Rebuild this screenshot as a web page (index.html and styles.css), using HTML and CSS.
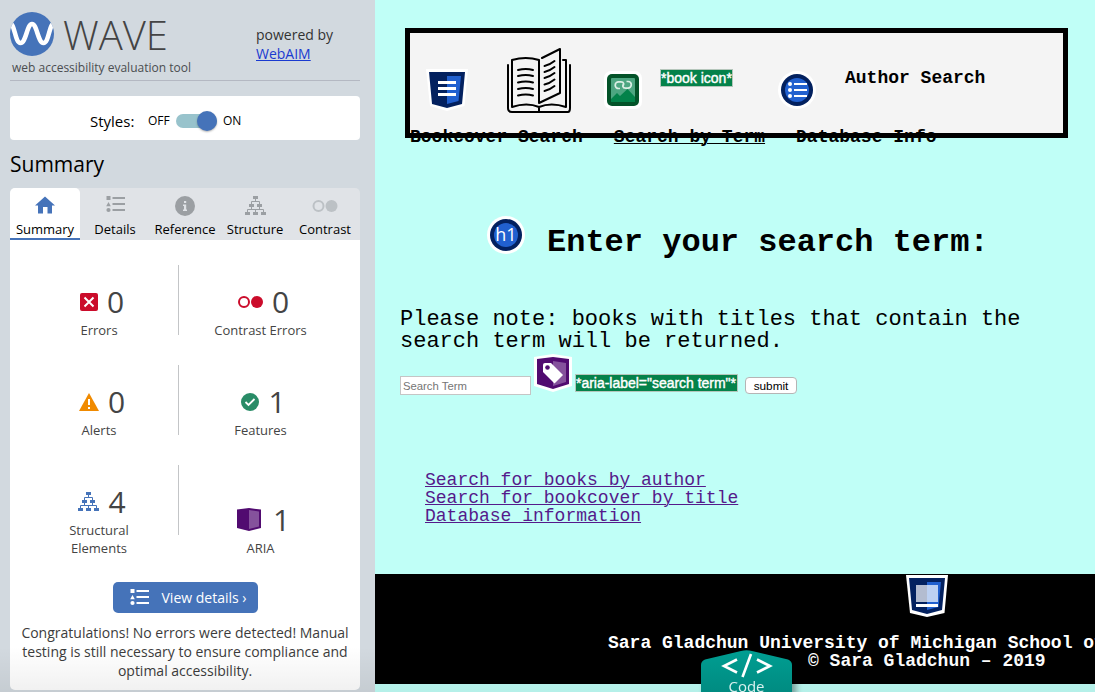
FILE: index.html
```
<!DOCTYPE html>
<html lang="en">
<head>
<meta charset="utf-8">
<title>WAVE - web accessibility evaluation tool</title>
<link rel="stylesheet" href="styles.css">
</head>
<body>
<svg class="defs" width="0" height="0">
  <symbol id="list" viewBox="0 0 19 17">
    <path d="M.5 0h4v4h-4zM2.5 6l2.3 4.300H.2z"/><circle cx="2.500" cy="14" r="2.100"/>
    <path d="M6.500 1h12.500v2H6.500zM6.500 7h12.500v2H6.500zM6.500 13h12.500v2H6.500z"/>
  </symbol>
  <symbol id="tree" viewBox="0 0 21 19">
    <path d="M8 0h5v3H8zM4 8h5v3H4zM12 8h5v3h-5zM0 16h5v3H0zM8 16h5v3H8zM16 16h5v3h-5z"/>
    <path d="M10.500 3v2.500M6.500 8V5.500h8V8M6.500 11v2.500M14.500 11v2.500M2.500 16v-2.500h16V16M10.500 13.500V16" fill="none" stroke="currentColor"/>
  </symbol>
</svg>
<aside class="sidebar">
  <header class="brand">
    <div class="brand-main">
      <div class="logo">
        <svg width="44" height="44" viewBox="0 0 44 44"><defs><clipPath id="disc"><circle cx="22" cy="22" r="22"/></clipPath></defs><circle cx="22" cy="22" r="22" fill="#4573b9"/><path clip-path="url(#disc)" d="M0 11.500C5 12 5 31 10.500 31S17 12 22 12s6 19 11.500 19S39 12 44 11.500" fill="none" stroke="#fff" stroke-width="4.600"/></svg>
        <span class="wordmark">WAVE</span>
      </div>
      <div class="tagline">web accessibility evaluation tool</div>
    </div>
    <div class="powered">powered by<br><a href="#">WebAIM</a></div>
  </header>
  <div class="styles-bar">
    <span class="styles-label">Styles:</span><span class="state">OFF</span><span class="switch"><span class="knob"></span></span><span class="state on">ON</span>
  </div>
  <h2 class="section-title">Summary</h2>
  <nav class="tabs">
    <div class="tab active"><div class="tab-icon"><svg width="20" height="18" viewBox="0 0 20 18"><path d="M10 .5L20 9.500h-3V17.500h-4.500V11h-4.500v6.500H3v-8H0z" fill="#4573b9"/></svg></div><span>Summary</span></div>
    <div class="tab"><div class="tab-icon"><svg width="19" height="17"><use href="#list"/></svg></div><span>Details</span></div>
    <div class="tab"><div class="tab-icon"><svg width="20" height="20" viewBox="0 0 20 20"><circle cx="10" cy="10" r="10"/><path d="M9 5h2.200v2H9zM8 8.500h3.200V13.500H12V15H8v-1.500h1V10H8z" fill="#e0e3e7"/></svg></div><span>Reference</span></div>
    <div class="tab"><div class="tab-icon"><svg width="21" height="19"><use href="#tree"/></svg></div><span>Structure</span></div>
    <div class="tab"><div class="tab-icon pair"><svg width="26" height="12" viewBox="0 0 26 12"><circle cx="6.500" cy="6" r="5" fill="none" stroke="#bcc1c5" stroke-width="2"/><circle cx="19.500" cy="6" r="6" fill="#bcc1c5"/></svg></div><span>Contrast</span></div>
  </nav>
  <section class="panel">
    <div class="counts">
      <div class="count-row">
        <div class="count left"><div class="figure"><svg width="18" height="18" viewBox="0 0 18 18"><rect width="18" height="18" rx="2" fill="#cb0c2b"/><path d="M4.500 4.500l9 9M13.500 4.500l-9 9" stroke="#fff" stroke-width="2"/></svg><b>0</b></div><span>Errors</span></div>
        <div class="count"><div class="figure"><svg width="25" height="12" viewBox="0 0 25 12"><circle cx="6" cy="6" r="5" fill="none" stroke="#cb0c2b" stroke-width="2"/><circle cx="19" cy="6" r="6" fill="#cb0c2b"/></svg><b>0</b></div><span>Contrast Errors</span></div>
      </div>
      <div class="count-row">
        <div class="count left"><div class="figure"><svg width="20" height="18" viewBox="0 0 20 18"><path d="M10 0l10 18H0z" fill="#f08a00"/><path d="M9 6h2v6H9zM9 14h2v2H9z" fill="#fff"/></svg><b>0</b></div><span>Alerts</span></div>
        <div class="count"><div class="figure"><svg width="18" height="18" viewBox="0 0 18 18"><circle cx="9" cy="9" r="9" fill="#298c67"/><path d="M4.500 9l3 3 6-6" fill="none" stroke="#fff" stroke-width="1.800"/></svg><b>1</b></div><span>Features</span></div>
      </div>
      <div class="count-row">
        <div class="count left"><div class="figure blue"><svg width="21" height="19"><use href="#tree"/></svg><b>4</b></div><span>Structural<br>Elements</span></div>
        <div class="count aria"><div class="figure"><svg width="24" height="23" viewBox="0 0 24 23"><path d="M0 1.500L12 0l12 1.500V20l-12 3-12-3z" fill="#510b70"/><path d="M12 2l10 1.500v15L12 21z" fill="#85529c"/></svg><b>1</b></div><span>ARIA</span></div>
      </div>
    </div>
    <button class="details"><svg width="19" height="17"><use href="#list"/></svg><span>View details ›</span></button>
    <p class="message">Congratulations! No errors were detected! Manual<br>testing is still necessary to ensure compliance and<br>optimal accessibility.</p>
  </section>
</aside>
<main class="page">
  <nav class="site-nav">
    <div class="nav-first">
      <svg class="i-nav" width="42" height="42" viewBox="0 0 42 42"><path d="M0 0h42l-3.500 37L21 42 4 37z" fill="#fff"/><path d="M3 3h36l-3 32-15 4-15-4z" fill="#03215f"/><path d="M21 7h14l-2.500 25L21 35z" fill="#2160cf"/><path d="M12 12h18v3H12zM12 18h18v3H12zM12 24h18v3H12z" fill="#fff"/></svg>
      <svg class="i-book" width="66" height="66" viewBox="0 0 66 66"><g fill="none" stroke="#000" stroke-width="2" stroke-linecap="round" stroke-linejoin="round"><path d="M2 17v43q0 4 4 4h56q2 0 2-4V17M6 59V12q14-4 27 0v43M33 55l21-10V1L36 10M57 12h3v47M6 59q15-5 27 0q12-5 27 0M33 59v5"/><path d="M12 22q8-2 15 0M12 28q8-2 15 0M12 34.500q8-2 15 0M12 41q8-2 15 0M12 47.500q8-2 15 0M38.500 18q5-1 10-5M38.500 24q5-1 10-5M38.500 30q5-1 10-5M38.500 36.500q5-1 10-5M38.500 43q5-1 10-5"/></g></svg>
      <svg class="i-alt" width="38" height="38" viewBox="0 0 38 38"><rect width="38" height="38" rx="7" fill="#fff"/><rect x="3" y="3" width="32" height="32" rx="5" fill="#035329"/><rect x="7" y="7" width="24" height="24" rx="1" fill="#4da681"/><path d="M7 28l6-6 3 3 7.500-7L31 26v5H7z" fill="#03824a"/><path d="M16 17.500h-1.500a3.300 3.300 0 0 1 0-6.600H17c3 0 3.500 3 1.500 4.500M22.500 10.500H24a3.300 3.300 0 0 1 0 6.600h-2.500c-3 0-3.500-3-1.500-4.500" fill="none" stroke="#dcefe5" stroke-width="1.700"/></svg>
      <span class="tip book">*book icon*</span>
      <svg class="i-list" width="38" height="38" viewBox="0 0 38 38"><circle cx="19" cy="19" r="19" fill="#fff"/><circle cx="19" cy="19" r="16" fill="#03215f"/><circle cx="19" cy="19" r="12" fill="#2160cf"/><path d="M16 12h13v2H16zM16 18h13v2H16zM16 24h13v2H16z" fill="#fff"/><g fill="#fff"><circle cx="12" cy="13" r="2"/><circle cx="12" cy="19" r="2"/><circle cx="12" cy="25" r="2"/></g></svg>
      <span class="nav-text">Author Search</span>
    </div>
    <div class="nav-second"><span>Bookcover Search</span><span class="current">Search by Term</span><span>Database Info</span></div>
  </nav>
  <div class="heading">
    <svg width="38" height="38" viewBox="0 0 38 38"><circle cx="19" cy="19" r="19" fill="#fff"/><circle cx="19" cy="19" r="16" fill="#03215f"/><circle cx="19" cy="19" r="12" fill="#2160cf"/><text class="h1-mark" x="19" y="25" text-anchor="middle">h1</text></svg>
    <h1>Enter your search term:</h1>
  </div>
  <p class="note">Please note: books with titles that contain the<br>search term will be returned.</p>
  <form class="search">
    <input class="term" placeholder="Search Term">
    <svg class="i-label" width="38" height="36" viewBox="0 0 38 36"><path d="M0 2l19-3 19 3v29l-19 6L0 31z" fill="#fff"/><path d="M3 4l16-2 16 2v25l-16 5-16-5z" fill="#510b70"/><path d="M19 6l13 2v19l-13 4z" fill="#85529c"/><path d="M9 10q0-2 2-2h6l12 12-8.500 8.500L9 17z" fill="#fff"/><circle cx="13.500" cy="12.500" r="2.300" fill="#510b70"/></svg>
    <span class="tip aria-tip">*aria-label="search term"*</span>
    <button type="button" class="submit">submit</button>
  </form>
  <ul class="links"><li><a href="#">Search for books by author</a></li><li><a href="#">Search for bookcover by title</a></li><li><a href="#">Database information</a></li></ul>
  <footer class="foot">
    <svg width="42" height="42" viewBox="0 0 42 42"><path d="M0 0h42l-3.500 38L21 42 4 38z" fill="#fff"/><path d="M3 3h36l-3 32-15 4-15-4z" fill="#03215f"/><path d="M21 7h14l-2.500 25L21 35z" fill="#2160cf"/><path d="M10 10h11v17H10z" fill="#b3bcd0"/><path d="M21 10h11v17H21z" fill="#bcd0f2"/><path d="M10 29h22v3H10z" fill="#fff"/></svg>
    <p>Sara Gladchun University of Michigan School of Information</p>
    <p class="copy">© Sara Gladchun – 2019</p>
  </footer>
</main>
<div class="shade"></div>
<div class="code-tab"><svg width="91" height="46" viewBox="0 0 91 46"><defs><linearGradient id="teal" x2="0" y2="1"><stop stop-color="#009e92"/><stop offset="1" stop-color="#008a80"/></linearGradient></defs><path d="M0 46V16q0-4 4-5.500L40 2q5.500-1.500 11 0l36 8.500q4 1.500 4 5.500v30z" fill="url(#teal)"/><path d="M36 10.500L23 17 36 23.500M56 10.500l13 6.500L56 23.500M50 5l-8.500 23" fill="none" stroke="#fff" stroke-width="2.600"/></svg><span>Code</span></div>
</body>
</html>
```
FILE: styles.css
```
* { box-sizing: border-box; }
body { margin: 0; width: 1095px; height: 692px; overflow: hidden; display: flex; font-family: "Open Sans", sans-serif; position: relative; }
svg { display: block; flex: none; overflow: visible; }
p, h1, h2, ul { margin: 0; padding: 0; }
.defs { position: absolute; }

.sidebar { width: 375px; height: 692px; flex: none; background: #d2d9df; padding: 0 15px 0 10px; }
.brand { height: 81px; padding-top: 12px; border-bottom: 1px solid #b4b8c2; display: flex; }
.brand-main { width: 246px; }
.logo { display: flex; height: 44px; }
.wordmark { font-size: 40px; font-weight: 300; line-height: 46px; color: #444; margin-left: 9px; }
.tagline { font-size: 12px; line-height: 16px; margin: 4px 0 0 2px; color: #4a4d50; white-space: nowrap; }
.powered { font-size: 14px; line-height: 19px; margin-top: 13px; color: #333; white-space: nowrap; }
.powered a { color: #1a3ad0; }
.styles-bar { height: 44px; margin-top: 15px; background: #fff; border-radius: 4px; display: flex; align-items: center; padding: 5px 0 0 80px; white-space: nowrap; }
.styles-label { font-size: 15px; width: 58px; }
.state { font-size: 12px; width: 28px; }
.state.on { margin-left: 6px; }
.switch { width: 41px; height: 14px; border-radius: 7px; background: #98c3cc; display: flex; align-items: center; justify-content: flex-end; }
.knob { width: 20px; height: 20px; border-radius: 50%; background: #4573b9; flex: none; box-shadow: 0 1px 2px rgba(0,0,0,.3); }
.section-title { font-size: 21px; font-weight: 400; line-height: 28px; margin-top: 10px; height: 38px; }
.tabs { display: flex; height: 52px; background: #e0e3e7; border-radius: 5px 5px 0 0; }
.tab { width: 70px; font-size: 13px; line-height: 18px; display: flex; flex-direction: column; align-items: center; white-space: nowrap; color: #000; }
.tab.active { background: #fff; border-bottom: 2px solid #4573b9; border-radius: 5px 5px 0 0; }
.tab-icon { height: 32px; flex: none; padding-top: 8px; color: #9b9fa3; fill: currentColor; }
.tab-icon.pair { padding-top: 12px; }
.panel { height: 450px; background: #fff; border-radius: 0 0 5px 5px; padding-top: 25px; display: flex; flex-direction: column; align-items: center; }
.counts { width: 350px; height: 317px; }
.count-row { display: flex; height: 100px; }
.count { width: 163px; padding-top: 17px; font-size: 13px; line-height: 18px; color: #444; text-align: center; display: flex; flex-direction: column; align-items: center; }
.count.left { width: 169px; height: 70px; padding-left: 10px; border-right: 1px solid #c3c5c7; }
.count.aria { padding-top: 35px; }
.figure { display: flex; align-items: center; flex: none; gap: 9px; height: 39px; padding-left: 6px; }
.figure b { font-size: 30px; line-height: 36px; font-weight: 400; }
.aria .figure { gap: 12px; }
.figure.blue svg { color: #4573b9; fill: currentColor; }
.details { width: 145px; height: 31px; border: 0; border-radius: 5px; background: #4573b9; color: #fff; fill: #fff; font: 14px "Open Sans", sans-serif; display: flex; align-items: center; padding: 0 0 1px 17px; gap: 13px; white-space: nowrap; flex: none; }
.message { margin-top: 10px; font-size: 14px; line-height: 19px; text-align: center; color: #3c3c3c; white-space: nowrap; }

.page { width: 720px; flex: none; height: 692px; background: #c0fff7; font-family: "Liberation Mono", monospace; padding-top: 28px; overflow: hidden; }
.site-nav { width: 663px; height: 110px; margin-left: 30px; border: 5px solid #000; background: #f4f4f4; font-weight: 700; font-size: 18px; line-height: 20px; white-space: nowrap; }
.nav-first { display: flex; height: 94px; align-items: flex-start; padding-left: 16px; }
.i-nav { margin-top: 36px; }
.i-book { margin: 15px 0 0 38px; }
.i-alt { margin: 38px 0 0 32px; }
.i-list { margin: 38px 0 0 45px; }
.nav-text { margin: 35px 0 0 29px; }
.nav-second { display: flex; gap: 31px; }
.current { text-decoration: underline; text-decoration-thickness: 1px; }
.tip { background: #04824a; color: #fff; border: 1px solid #b5c6bb; font: 14px/16px "Liberation Sans", sans-serif; white-space: nowrap; -webkit-text-stroke: .4px #fff; }
.tip.book { margin: 36px 0 0 18px; width: 73px; height: 18px; }
.heading { display: flex; align-items: flex-start; padding: 78px 0 0 112px; height: 163px; }
.heading h1 { font-size: 32px; line-height: 36px; margin: 9px 0 0 22px; }
.h1-mark { font: 18px "Open Sans", sans-serif; fill: #fff; }
.note { margin-left: 25px; padding-top: 8px; font-size: 22px; line-height: 22px; white-space: nowrap; }
.search { display: flex; align-items: flex-start; padding-left: 25px; height: 118px; font-family: "Liberation Sans", sans-serif; }
.term { width: 131px; height: 19px; margin-top: 23px; padding: 1px 2px; border: 1px solid #c5c5c5; font: 11.300px "Liberation Sans", sans-serif; background: #fff; }
.term::placeholder { color: #757575; }
.i-label { margin: 2px 0 0 3px; }
.aria-tip { margin: 21px 0 0 3px; width: 163px; height: 18px; letter-spacing: -.02px; }
.submit { width: 52px; height: 17px; margin: 24px 0 0 7px; padding: 0; border: 1px solid #b5b5b5; border-radius: 4px; background: #fff; font: 11.800px/14px "Liberation Sans", sans-serif; color: #000; }
.links { list-style: none; padding-left: 50px; font-size: 18px; line-height: 18px; height: 103px; }
.links a { color: #551a8b; text-decoration-thickness: 1px; }
.foot { height: 110px; background: #000; color: #fff; font-size: 18px; line-height: 18px; font-weight: 700; padding: 1px 0 0 233px; white-space: nowrap; }
.foot svg { margin: 0 0 17px 298px; }
.copy { padding-left: 200px; }
.shade { position: absolute; left: 0; right: 0; bottom: 0; height: 45px; background: linear-gradient(transparent, rgba(0,0,0,.06)); }
.code-tab { position: absolute; left: 701px; top: 649px; width: 91px; height: 43px; color: #d8f1ef; font-size: 15px; filter: drop-shadow(4px 3px 3px rgba(0,0,0,.35)); }
.code-tab span { position: absolute; left: 0; right: 0; top: 27px; text-align: center; line-height: 20px; }
```
